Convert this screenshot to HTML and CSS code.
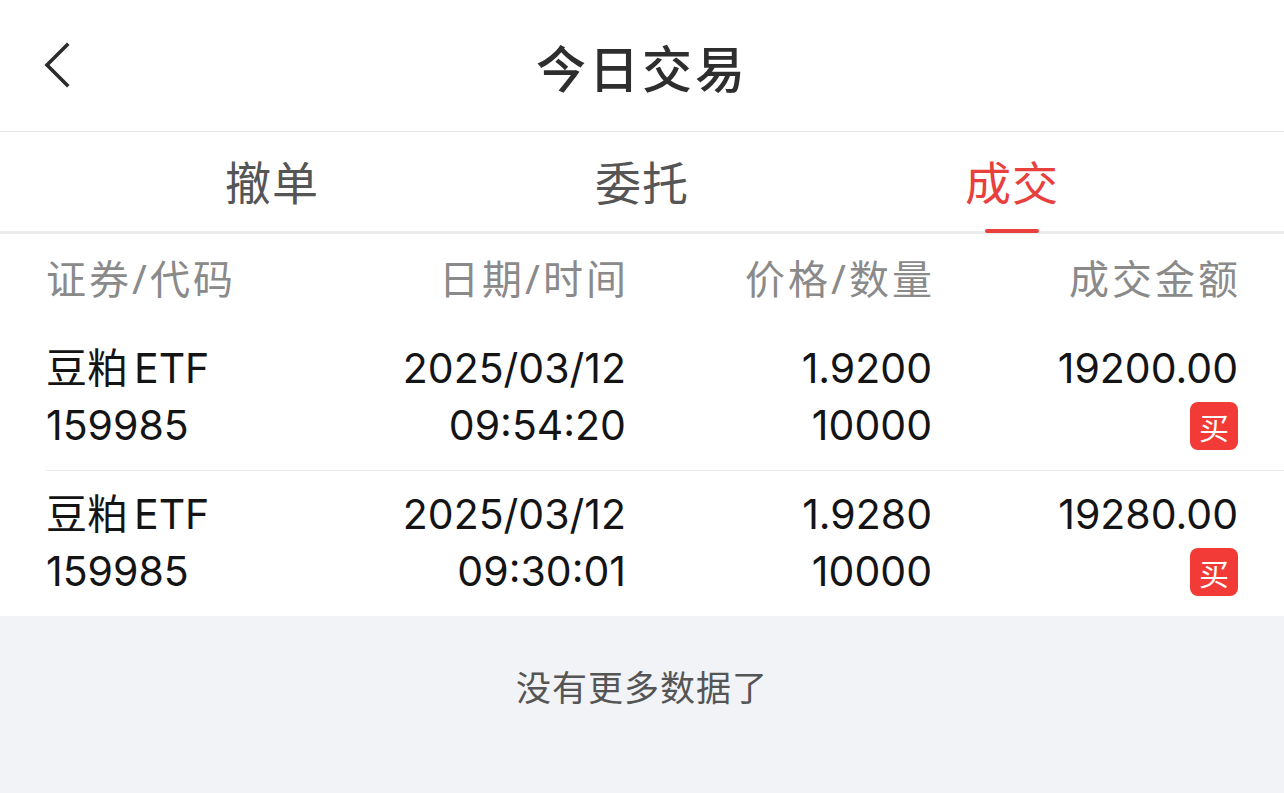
FILE: index.html
```html
<!DOCTYPE html>
<html lang="zh-CN">
<head>
    <meta charset="UTF-8">
    <meta name="viewport" content="width=device-width, initial-scale=1.0">
    <title>今日交易</title>
    <link rel="stylesheet" href="styles.css">
</head>
<body>
    <div class="page">
        <header class="nav-bar">
            <button class="back-btn" aria-label="返回">
                <svg width="32" height="48" viewBox="0 0 32 48">
                    <path d="M27 3 L7 23 L27 43" fill="none" stroke="#2b2b2b" stroke-width="3.6" stroke-linecap="square"/>
                </svg>
            </button>
            <h1>今日交易</h1>
        </header>

        <nav class="tabs">
            <div class="tab">撤单</div>
            <div class="tab">委托</div>
            <div class="tab active">成交</div>
        </nav>

        <div class="table">
            <div class="table-head">
                <div class="col-name">证券/代码</div>
                <div>日期/时间</div>
                <div>价格/数量</div>
                <div>成交金额</div>
            </div>

            <div class="row">
                <div class="col-name">
                    <div>豆粕<span class="latin">ETF</span></div>
                    <div>159985</div>
                </div>
                <div>
                    <div>2025/03/12</div>
                    <div>09:54:20</div>
                </div>
                <div>
                    <div>1.9200</div>
                    <div>10000</div>
                </div>
                <div>
                    <div>19200.00</div>
                    <div class="badge-line"><span class="badge">买</span></div>
                </div>
            </div>

            <div class="row">
                <div class="col-name">
                    <div>豆粕<span class="latin">ETF</span></div>
                    <div>159985</div>
                </div>
                <div>
                    <div>2025/03/12</div>
                    <div>09:30:01</div>
                </div>
                <div>
                    <div>1.9280</div>
                    <div>10000</div>
                </div>
                <div>
                    <div>19280.00</div>
                    <div class="badge-line"><span class="badge">买</span></div>
                </div>
            </div>
        </div>

        <div class="no-more">没有更多数据了</div>
    </div>
</body>
</html>
```

FILE: styles.css
```css
body {
    margin: 0;
    padding: 0;
    font-family: "Noto Sans", "Noto Sans CJK SC", sans-serif;
    background-color: #f2f3f7;
    color: #111111;
}
.page {
    width: 1284px;
    min-height: 793px;
}
.nav-bar {
    height: 131px;
    background: #ffffff;
    border-bottom: 1px solid #e6e6e6;
    display: flex;
    align-items: center;
    justify-content: center;
    position: relative;
}
.nav-bar h1 {
    margin: 0;
    font-family: "Noto Sans CJK SC", sans-serif;
    font-size: 50px;
    font-weight: 500;
    color: #2e2e2e;
    letter-spacing: 3px;
}
.back-btn {
    position: absolute;
    left: 40px;
    top: 42px;
    padding: 0;
    border: none;
    background: none;
    display: flex;
}
.tabs {
    height: 99px;
    background: #ffffff;
    border-bottom: 3px solid #ececec;
    display: grid;
    grid-template-columns: repeat(3, 370px);
    justify-content: center;
}
.tab {
    position: relative;
    display: flex;
    align-items: center;
    justify-content: center;
    font-size: 46px;
    color: #555555;
    padding-bottom: 4px;
    letter-spacing: 1px;
}
.tab.active {
    color: #e8403c;
}
.tab.active::after {
    content: "";
    position: absolute;
    bottom: -2px;
    left: 50%;
    width: 54px;
    height: 4px;
    margin-left: -27px;
    background: #e8403c;
    border-radius: 2px;
}
.table {
    background: #ffffff;
    padding: 0 0 0 46px;
}
.table-head, .row {
    display: grid;
    grid-template-columns: 1fr 306px 306px 306px;
    padding-right: 46px;
    text-align: right;
}
.col-name {
    text-align: left;
}
.table-head {
    height: 91px;
    padding-bottom: 6px;
    box-sizing: border-box;
    align-items: center;
    font-size: 40px;
    color: #8a8a8a;
    letter-spacing: 3px;
}
.table-head > div {
    margin-right: -3px;
}
.row {
    font-family: "Inter", "Noto Sans CJK SC", sans-serif;
    font-size: 41px;
    line-height: 57px;
    padding-top: 15px;
    padding-bottom: 16px;
    color: #141414;
}
.row + .row {
    border-top: 1px solid #ececec;
}
.latin {
    margin-left: 6px;
}
.badge-line {
    height: 57px;
    display: flex;
    justify-content: flex-end;
    align-items: center;
}
.badge {
    width: 48px;
    height: 48px;
    border-radius: 8px;
    background: #f23b36;
    color: #ffffff;
    font-family: "Noto Sans CJK SC", sans-serif;
    font-size: 30px;
    line-height: 48px;
    text-align: center;
}
.no-more {
    text-align: center;
    padding-top: 44px;
    font-size: 35px;
    color: #555555;
    letter-spacing: 1px;
}
```
